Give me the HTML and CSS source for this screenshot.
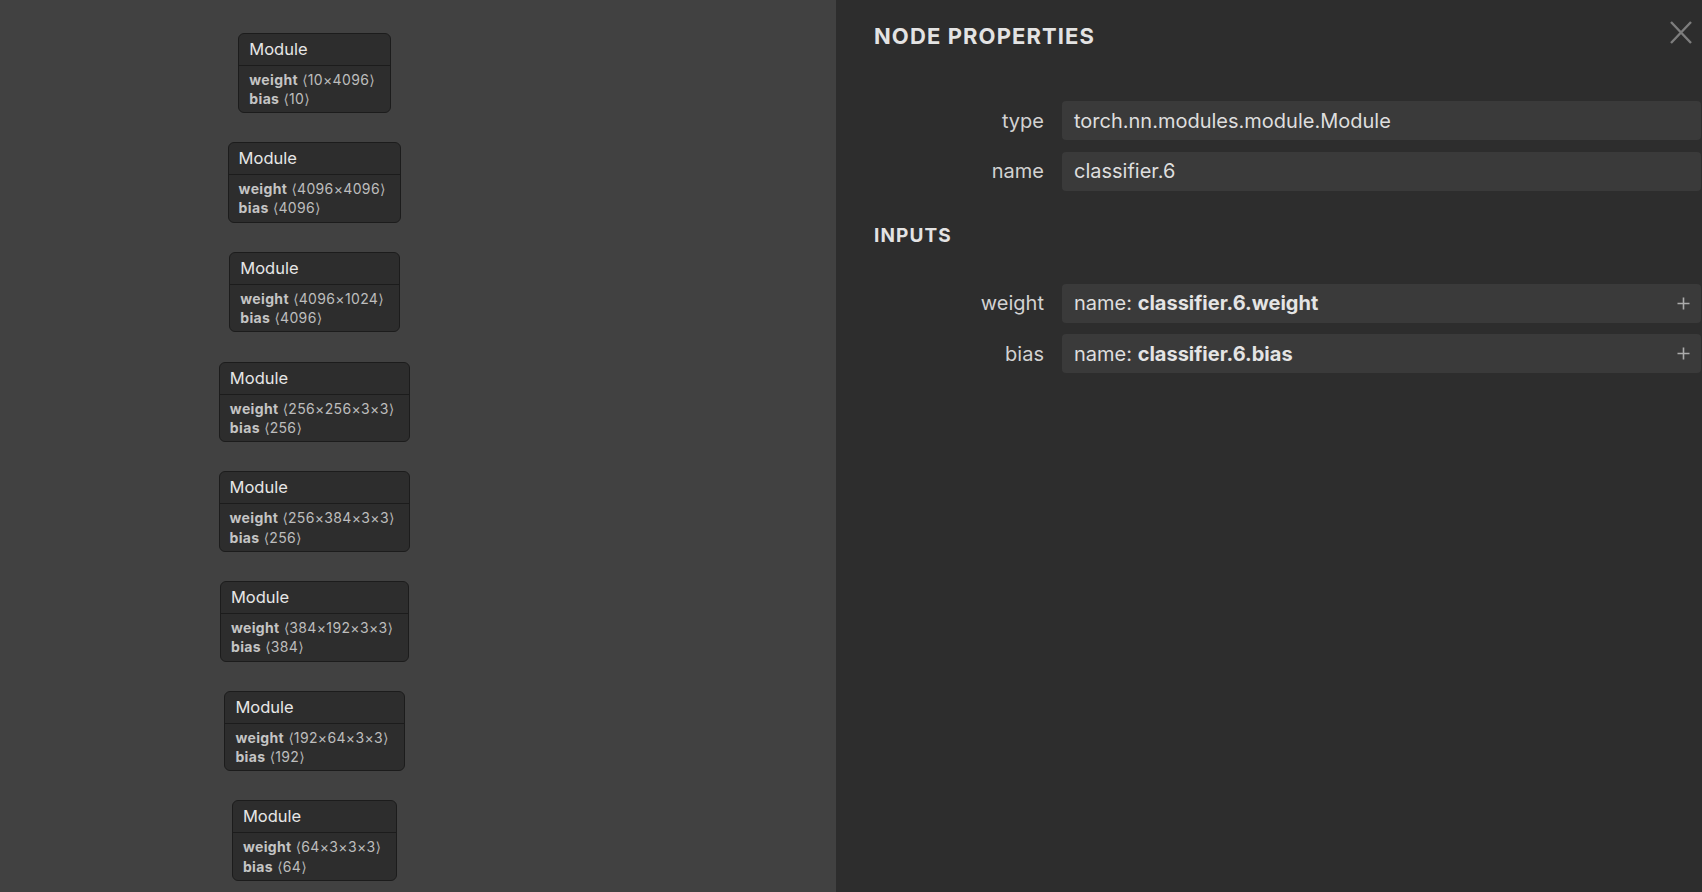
FILE: index.html
```html
<!DOCTYPE html>
<html>
<head>
<meta charset="utf-8">
<link rel="stylesheet" href="styles.css">
</head>
<body>
<div class="app">
  <div class="graph">
    <div class="column">
      <div class="node"><div class="node-head">Module</div><div class="node-body"><div><b>weight</b> <i>⟨</i>10×4096<i>⟩</i></div><div><b>bias</b> <i>⟨</i>10<i>⟩</i></div></div></div>
      <div class="node"><div class="node-head">Module</div><div class="node-body"><div><b>weight</b> <i>⟨</i>4096×4096<i>⟩</i></div><div><b>bias</b> <i>⟨</i>4096<i>⟩</i></div></div></div>
      <div class="node"><div class="node-head">Module</div><div class="node-body"><div><b>weight</b> <i>⟨</i>4096×1024<i>⟩</i></div><div><b>bias</b> <i>⟨</i>4096<i>⟩</i></div></div></div>
      <div class="node"><div class="node-head">Module</div><div class="node-body"><div><b>weight</b> <i>⟨</i>256×256×3×3<i>⟩</i></div><div><b>bias</b> <i>⟨</i>256<i>⟩</i></div></div></div>
      <div class="node"><div class="node-head">Module</div><div class="node-body"><div><b>weight</b> <i>⟨</i>256×384×3×3<i>⟩</i></div><div><b>bias</b> <i>⟨</i>256<i>⟩</i></div></div></div>
      <div class="node"><div class="node-head">Module</div><div class="node-body"><div><b>weight</b> <i>⟨</i>384×192×3×3<i>⟩</i></div><div><b>bias</b> <i>⟨</i>384<i>⟩</i></div></div></div>
      <div class="node"><div class="node-head">Module</div><div class="node-body"><div><b>weight</b> <i>⟨</i>192×64×3×3<i>⟩</i></div><div><b>bias</b> <i>⟨</i>192<i>⟩</i></div></div></div>
      <div class="node"><div class="node-head">Module</div><div class="node-body"><div><b>weight</b> <i>⟨</i>64×3×3×3<i>⟩</i></div><div><b>bias</b> <i>⟨</i>64<i>⟩</i></div></div></div>
    </div>
  </div>
  <div class="sidebar">
    <div class="close">
      <svg width="22" height="23" viewBox="0 0 22 23"><path d="M1 1 L21 22 M21 1 L1 22" stroke="#7d7d7d" stroke-width="2.4" fill="none"/></svg>
    </div>
    <div class="title">NODE PROPERTIES</div>
    <div class="props">
      <div class="row"><div class="label">type</div><div class="field">torch.nn.modules.module.Module</div></div>
      <div class="row"><div class="label">name</div><div class="field">classifier.6</div></div>
    </div>
    <div class="section">INPUTS</div>
    <div class="props inputs">
      <div class="row"><div class="label">weight</div><div class="field"><span>name: <b>classifier.6.weight</b></span><svg class="plus" width="13" height="13" viewBox="0 0 13 13"><path d="M6.5 0.5 V12.5 M0.5 6.5 H12.5" stroke="#ababab" stroke-width="1.6" fill="none"/></svg></div></div>
      <div class="row"><div class="label">bias</div><div class="field"><span>name: <b>classifier.6.bias</b></span><svg class="plus" width="13" height="13" viewBox="0 0 13 13"><path d="M6.5 0.5 V12.5 M0.5 6.5 H12.5" stroke="#ababab" stroke-width="1.6" fill="none"/></svg></div></div>
    </div>
  </div>
</div>
</body>
</html>
```

FILE: styles.css
```css
html, body {
  margin: 0;
  padding: 0;
  height: 100%;
  background: #2d2d2d;
  font-family: Inter, "Noto Sans", sans-serif;
}
.app {
  display: flex;
  height: 892px;
  overflow: hidden;
}
.graph {
  width: 836px;
  flex: none;
  background: #414141;
}
.column {
  width: 629px;
  display: flex;
  flex-direction: column;
  align-items: center;
  padding-top: 32.5px;
  gap: 29.1px;
}
.node {
  background: #2d2d2d;
  border: 1px solid #1c1c1c;
  border-radius: 6px;
  color: #d6d6d6;
}
.node-head {
  height: 31px;
  line-height: 31px;
  font-size: 16.5px;
  padding: 0 10px;
  color: #e6e6e6;
  border-bottom: 1px solid #1c1c1c;
}
.node-body {
  padding: 4px 15px 4px 10px;
  font-size: 14px;
  letter-spacing: 0.35px;
  line-height: 19.3px;
  color: #bdbdbd;
  white-space: nowrap;
}
.node-body > div {
  height: 19.3px;
}
.node-body b {
  font-weight: 700;
  color: #c4c4c4;
}
.node-body i {
  font-style: normal;
  font-family: "DejaVu Sans", sans-serif;
  font-size: 14px;
  line-height: 0;
  letter-spacing: 0;
  color: #b5b5b5;
}
.sidebar {
  flex: 1;
  position: relative;
  background: #2d2d2d;
  padding: 23px 1px 0 38px;
  color: #e0e0e0;
}
.close {
  position: absolute;
  top: 21px;
  right: 10px;
  width: 22px;
  height: 23px;
}
.title {
  font-size: 22px;
  line-height: 26px;
  font-weight: 700;
  letter-spacing: 1.1px;
  color: #e3e3e3;
}
.props {
  margin-top: 52px;
  display: flex;
  flex-direction: column;
  gap: 11.5px;
}
.row {
  display: flex;
  align-items: center;
  gap: 18px;
}
.label {
  width: 170px;
  flex: none;
  text-align: right;
  font-size: 20px;
  color: #d2d2d2;
}
.field {
  flex: 1;
  height: 39px;
  display: flex;
  align-items: center;
  justify-content: space-between;
  padding: 0 12px;
  background: #3a3a3a;
  border-radius: 4px;
  font-size: 20px;
  color: #dedede;
}
.field b {
  font-weight: 700;
  color: #e4e4e4;
}
.plus {
  display: block;
  margin-right: -1px;
}
.section {
  margin-top: 33px;
  font-size: 19px;
  line-height: 24px;
  font-weight: 700;
  letter-spacing: 1.1px;
  color: #e3e3e3;
}
.inputs {
  margin-top: 36px;
}
```
